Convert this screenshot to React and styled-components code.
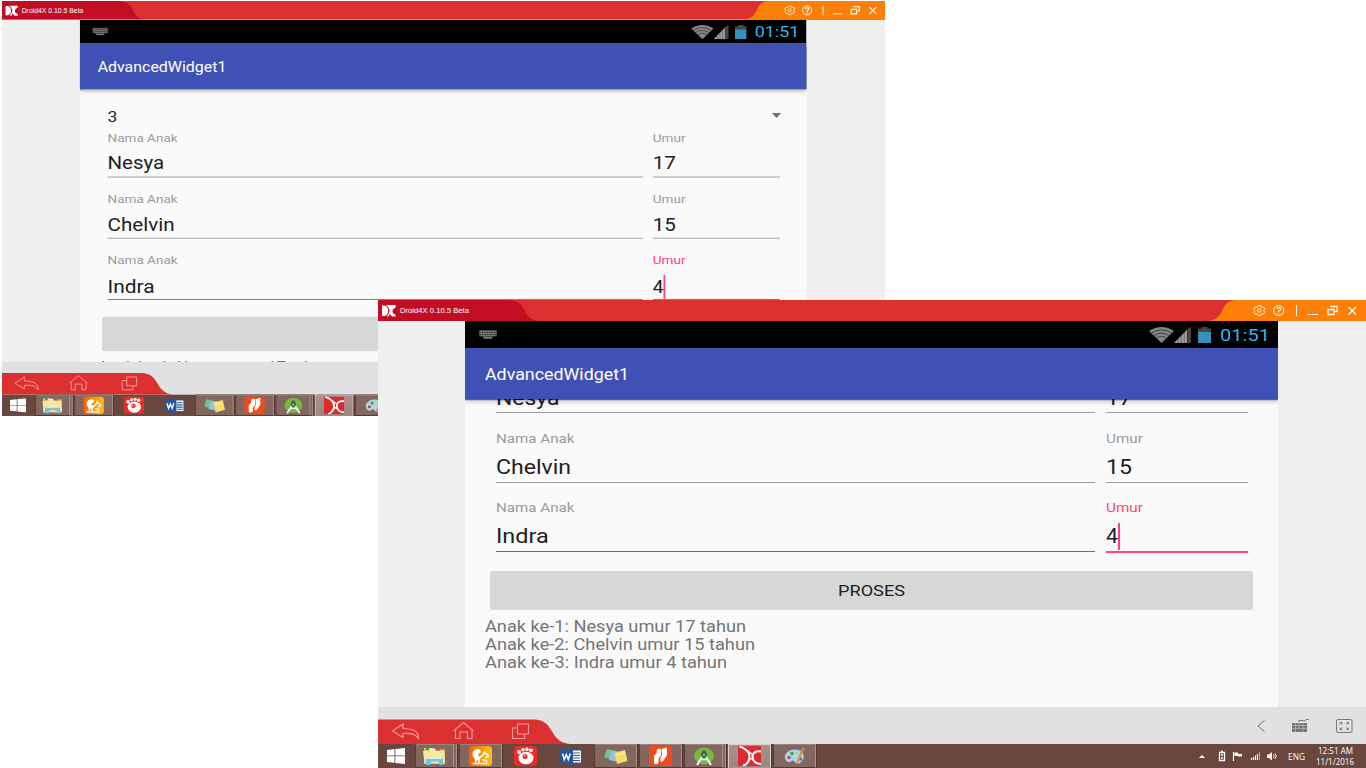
import React, { useLayoutEffect, useRef, useState } from "react";
import styled, { createGlobalStyle, css } from "styled-components";

const GlobalStyle = createGlobalStyle`
  * { box-sizing: border-box; }
  html, body { margin: 0; background: #fff; overflow: hidden; }
  svg { display: block; flex: none; }
`;

/* ---------- text stretched to a fixed width ---------- */

const FitBox = styled.span`
  display: block;
  flex: none;
  width: ${(p) => p.$w}px;
  white-space: nowrap;
`;

const FitInner = styled.span`
  display: inline-block;
  vertical-align: top;
  transform-origin: 0 50%;
`;

function Fit({ w, children }) {
  const ref = useRef(null);
  const [scale, setScale] = useState(1);
  useLayoutEffect(() => {
    const natural = parseFloat(getComputedStyle(ref.current).width);
    if (natural) setScale(w / natural);
  }, [w, children]);
  return (
    <FitBox $w={w}>
      <FitInner ref={ref} style={{ transform: `scaleX(${scale})` }}>{children}</FitInner>
    </FitBox>
  );
}

/* ---------- desktop and windows ---------- */

const Desktop = styled.main`
  position: relative;
  width: 1366px;
  height: 768px;
  overflow: hidden;
  background: #fff;
`;

const Window = styled.section`
  position: absolute;
  left: ${(p) => p.$x}px;
  top: ${(p) => p.$y}px;
  width: 988px;
  height: 468px;
  display: flex;
  flex-direction: column;
  overflow: hidden;
  background: #efefef;
  font-family: Roboto, "Liberation Sans", sans-serif;
  ${(p) => p.$small && css`
    transform: scale(0.8939, 0.8867);
    transform-origin: 0 0;
  `}
`;

const TitleBar = styled.header`
  height: 21px;
  flex: none;
  display: flex;
  justify-content: space-between;
  background: #dc3030;
`;

const TitleTab = styled.div`
  display: grid;
  width: 160px;
  > * { grid-area: 1 / 1; }
`;

const TitleLabel = styled.div`
  display: flex;
  align-items: center;
  gap: 3px;
  padding-left: 3px;
  color: #fff;
  font: 8px/20px "Liberation Sans", Arial, sans-serif;
`;

const Phone = styled.div`
  width: 813px;
  height: 386px;
  margin-left: 87px;
  flex: none;
  display: flex;
  flex-direction: column;
  background: #fafafa;
  overflow: hidden;
`;

const StatusBar = styled.div`
  height: 27px;
  flex: none;
  display: flex;
  align-items: center;
  padding: 0 8.5px 0 13.5px;
  background: #000;
  color: #33b5e5;
  font-size: 17px;
`;

const StatusSpacer = styled.div`flex: 1;`;

const StatusGap = styled.div`width: 7px;`;

const Clock = styled.div`
  margin-left: 8.5px;
  padding-top: 1px;
  line-height: 26px;
`;

const AppBar = styled.div`
  position: relative;
  z-index: 1;
  height: 51px;
  flex: none;
  padding: 2px 0 0 20px;
  background: #3f51b5;
  color: #fff;
  font-size: 16.5px;
  line-height: 50px;
  box-shadow: 0 1px 1px rgba(0, 0, 0, 0.5), 0 2px 5px rgba(0, 0, 0, 0.28);
`;

const Viewport = styled.div`
  flex: 1;
  min-height: 0;
  overflow: hidden;
`;

const Content = styled.div`
  margin-top: ${(p) => -p.$scroll}px;
`;

const Spinner = styled.div`
  height: 46px;
  display: flex;
  justify-content: space-between;
  padding: 18.6px 28px 0 30.5px;
  color: #212121;
  font-size: 17.5px;
  line-height: 24px;
  svg { margin-top: 8.2px; }
`;

const Child = styled.div`
  display: grid;
  grid-template-columns: 599.5px 142px;
  column-gap: 11px;
  height: 69.2px;
  padding-left: 30.5px;
`;

const Label = styled.div`
  height: 18px;
  color: ${(p) => (p.$active ? "#ff4081" : "#9b9b9b")};
  font-size: 13px;
  line-height: 19.4px;
`;

const Value = styled.div`
  display: flex;
  height: 34.6px;
  padding-top: 7.2px;
  color: #212121;
  font-size: 20.8px;
  line-height: 27px;
`;

const Underline = styled.div`
  height: ${(p) => p.$h}px;
  background: ${(p) => p.$c};
`;

const Caret = styled.i`
  width: 2px;
  height: 27px;
  background: #ff4081;
`;

const Button = styled.div`
  display: flex;
  align-items: center;
  justify-content: center;
  width: 763px;
  height: 38.5px;
  margin: 3.8px 0 0 25px;
  padding-top: 1.4px;
  border-radius: 2px;
  background: #d6d8d7;
  color: #212121;
  font-size: 15px;
`;

const Results = styled.div`
  padding: 8.8px 0 0 20px;
  color: #757575;
  font-size: 16px;
  line-height: 17.7px;
`;

/* ---------- emulator bottom bar ---------- */

const BottomBar = styled.div`
  height: 37px;
  flex: none;
  display: flex;
  justify-content: space-between;
  align-items: flex-end;
  background: #e1e1e1;
`;

const Tools = styled.div`
  display: flex;
  align-items: center;
  height: 37px;
  gap: 27px;
  padding-right: 13px;
`;

/* ---------- taskbar ---------- */

const Taskbar = styled.footer`
  height: 24px;
  flex: none;
  display: flex;
  justify-content: space-between;
  background: #69463e;
  color: #fff;
`;

const Apps = styled.div`
  display: flex;
  gap: 2px;
`;

const Task = styled.div`
  display: flex;
  align-items: center;
  justify-content: center;
  width: ${(p) => p.$w || 43}px;
  border: 1px solid transparent;
  ${(p) => p.$open && css`
    background: #826761;
    border-color: #9a827c #a8928d #553730 #5a3b34;
    box-shadow: 1px 0 0 #4f322b;
  `}
  ${(p) => p.$stack && css`
    border-right: 4px double #a8928d;
  `}
  ${(p) => p.$focus && css`
    background: linear-gradient(#a6928e, #9b8681);
    border-color: #d9cfcc #e2dad8 #a8928d #d9cfcc;
  `}
`;

const Tray = styled.div`
  display: flex;
  align-items: center;
  padding-right: 12px;
  font: 9px/11px "Open Sans", "Noto Sans", sans-serif;
`;

const Language = styled.div`margin-left: 9px;`;

const DateTime = styled.div`
  display: flex;
  flex-direction: column;
  align-items: center;
  margin-left: 11px;
  padding-bottom: 1px;
`;

/* ---------- drawings ---------- */

const TabShape = () => (
  <svg width="160" height="21">
    <path d="M0 0H128C139 0 144 4 147 11C150 18 154 20 160 21H0Z" fill="#c30d23" />
  </svg>
);

const Logo = () => (
  <svg width="16" height="12" viewBox="0 0 16 12">
    <path d="M1 0.500H3.500C8.500 2 8.500 9.500 3.500 11H1Z" fill="#fff" />
    <path d="M5 0H14.500V3C10.500 3 10.500 9.500 14.500 9.500V11.500H11L9 9L7.500 11.500H5.500Q9 8 8.500 5Q8 2 5 0Z" fill="#fff" />
  </svg>
);

const Controls = () => (
  <svg width="158" height="21" viewBox="0 0 158 21" fill="none" stroke="#fff">
    <path d="M27 0H158V21H0C8 20 11 17 14 11C17 4 20 1 27 0Z" fill="#fb7f09" stroke="none" />
    <path d="M50 5.500H52.500L53.300 7.200L55.500 7L56.800 9L55.600 10.500L56.800 12.200L55.500 14L53.300 13.900L52.500 15.500H50L49.200 13.900L47 14L45.700 12.200L46.900 10.500L45.700 9L47 7L49.200 7.200Z" strokeWidth="0.900" />
    <circle cx="51.200" cy="10.500" r="1.700" strokeWidth="0.900" />
    <circle cx="70.700" cy="10.500" r="5" />
    <path d="M68.800 9.200Q69 7.700 70.700 7.700T72.600 9.200Q72.500 10.200 70.700 11V12M70.700 12.800V13.800" strokeWidth="1.200" />
    <path d="M88.500 5V16M99.500 14.500H110" />
    <path d="M123 7V6.500H129V11.500H127M120 9.500H126V14.500H120Z" strokeWidth="1.300" />
    <path d="M140.500 7L148 14.500M148 7L140.500 14.500" strokeWidth="1.300" />
  </svg>
);

const StatusKeyboard = () => (
  <svg width="18" height="9" viewBox="0 0 18 9">
    <path d="M0 0H18V6.500H14L13 9H4.500L3.500 6.500H0Z" fill="#4a4a4a" />
    <path d="M1 1.500H17M1.500 3.500H17M2 5.500H16" stroke="#8c8c8c" strokeDasharray="1.500 1" />
    <path d="M5 7.700H13" stroke="#8c8c8c" />
  </svg>
);

const Wifi = () => (
  <svg width="25" height="16" viewBox="0 0 25 16">
    <path d="M0 4Q12.500 -4 25 4L12.500 16Z" fill="#858585" />
    <path d="M2 6.300Q12.500 -0.500 23 6.300M4.500 8.800Q12.500 3.500 20.500 8.800M7.200 11.200Q12.500 7.500 17.800 11.200" fill="none" stroke="#333" strokeWidth="0.800" />
  </svg>
);

const Signal = () => (
  <svg width="17" height="16" viewBox="0 0 17 16">
    <path d="M0 16L13 2.700V16Z" fill="#a2a2a2" />
    <path d="M13.500 2L17 0V16H13.500Z" fill="#484848" />
    <path d="M4.200 11V16M7.200 8V16M10.200 5V16M13.300 2V16" stroke="#444" strokeWidth="0.700" />
  </svg>
);

const Battery = () => (
  <svg width="13" height="16" viewBox="0 0 13 16">
    <path d="M3.500 0H9.500V1.500H13V5H0V1.500H3.500Z" fill="#454545" />
    <path d="M0 5H13V16H0Z" fill="#3591ba" />
  </svg>
);

const DropArrow = () => (
  <svg width="11" height="6"><path d="M0 0H11L5.500 6Z" fill="#737373" /></svg>
);

const NavBar = () => (
  <svg width="196" height="25" viewBox="0 0 196 25" fill="none" stroke="#f39a98" strokeWidth="1.100">
    <path d="M0 0.500H157C167 1 171 7 175 14C179 21 184 24 192 25H0Z" fill="#dc3030" stroke="none" />
    <path d="M25 5L14.500 12L25 18.500V14.500C34 14 37 15 40.500 19.500C41 13 36 9.500 25 9.500Z" />
    <path d="M75.500 12L85.500 3.500L95.500 12M77.500 10.500V19.500H82V13H89.500V19.500H94V10.500" />
    <path d="M139.500 5H150.500V15H139.500ZM139 9H134.500V19.500H146.500V15.500" />
  </svg>
);

const Chevron = () => (
  <svg width="8" height="12" fill="none" stroke="#777"><path d="M7.500 0.500L1 6L7.500 11.500" /></svg>
);

const ToolKeyboard = () => (
  <svg width="17" height="13" viewBox="0 0 17 13" fill="none">
    <path d="M7 3V1.500H11Q12 3 13 1.500T17 0.500" stroke="#777" />
    <path d="M0 4H15V13H0Z" fill="#777" />
    <path d="M0 6.500H15M0 9.500H15M3.500 4V9.500M7 4V9.500M11 4V13M3.500 10V13" stroke="#c4c4c4" strokeWidth="0.600" />
  </svg>
);

const Expand = () => (
  <svg width="17" height="14" viewBox="0 0 17 14" fill="none" stroke="#777">
    <rect x="0.500" y="0.500" width="15.500" height="13" rx="1.500" />
    <path d="M4 5.500V3.500H6.500M4 3.500L6.500 5.500M10 5.500L12.500 3.500M10.500 3.500H12.500V5.500M4 8.500V10.500H6.500M4 10.500L6.500 8.500M10 8.500L12.500 10.500M10.500 10.500H12.500V8.500" strokeWidth="0.900" />
  </svg>
);

const WindowsIcon = () => (
  <svg width="18" height="16" viewBox="0 0 18 16" fill="#fff">
    <path d="M0 2L7.500 1V7.500H0ZM8.300 0.900L18 0V7.500H8.300ZM0 8.300H7.500V14.700L0 14ZM8.300 8.300H18V16L8.300 15Z" />
  </svg>
);

const FolderIcon = () => (
  <svg width="23" height="19" viewBox="0 0 23 19">
    <path d="M1 1H8L10 2.500H22V17H1Z" fill="#e2c768" />
    <path d="M3 0.500H6V3H3Z" fill="#2da84c" /><path d="M7 1.500H12V3.500H7Z" fill="#fff" />
    <path d="M13 1.500H17V3.500H13Z" fill="#c8513b" />
    <path d="M0 4H21L22 16H1.500Z" fill="#f4e9a2" />
    <path d="M4 11H20V18H16V14.500H8V18H3V13Z" fill="#79bfe2" />
    <path d="M4.500 11.500H19.500" stroke="#d5eef9" />
  </svg>
);

const SquirrelIcon = () => (
  <svg width="23" height="20" viewBox="0 0 23 20">
    <defs><linearGradient id="uc" x1="0" x2="1"><stop stopColor="#fa5f0a" /><stop offset="1" stopColor="#fcc303" /></linearGradient></defs>
    <rect width="23" height="20" rx="3.500" fill="url(#uc)" />
    <path d="M6.500 16.500C8.500 12.500 2.500 11 4.500 6.500C6.500 2.500 12 3 11 6C10.500 7.500 8.500 7 8.500 8.500C8.500 10 10.500 10.500 10 12.500" fill="#fff" stroke="#fff" strokeWidth="1.200" />
    <path d="M10.500 17.500Q8.500 13 12 10.500Q14 10 14.500 8L15.500 6L16.500 7.800Q20 8.500 19 10.500Q17.500 11.500 16 11.500" fill="none" stroke="#fff" strokeWidth="1.700" />
    <path d="M3.500 17.500H17.500Q18.500 15.500 16.500 13.500M13 14Q15 13 15.500 15.500" fill="none" stroke="#fff" strokeWidth="1.400" />
  </svg>
);

const PawIcon = () => (
  <svg width="23" height="20" viewBox="0 0 23 20">
    <rect width="23" height="20" rx="3.500" fill="#ec2c25" />
    <ellipse cx="12" cy="12" rx="7.500" ry="6.300" fill="#fff" />
    <circle cx="5" cy="6" r="2" fill="#fff" /><circle cx="9" cy="3.800" r="1.700" fill="#fff" />
    <circle cx="13" cy="3.200" r="1.700" fill="#fff" /><circle cx="17" cy="4.300" r="1.900" fill="#fff" />
    <circle cx="11" cy="10.500" r="2.500" fill="#ec2c25" /><circle cx="10.500" cy="9.800" r="0.800" fill="#fff" />
  </svg>
);

const WordIcon = () => (
  <svg width="22" height="17" viewBox="0 0 22 17">
    <path d="M11 2H21.500V15H11Z" fill="#fff" stroke="#2a5699" />
    <path d="M13 5H20M13 7.500H20M13 10H20M13 12.500H20" stroke="#2a5699" strokeWidth="1.200" />
    <path d="M0 2L13 0V17L0 15Z" fill="#2a5699" />
    <path d="M2.500 5.500L4.300 11.500L6.300 6.500L8.300 11.500L10.300 5.500" fill="none" stroke="#fff" strokeWidth="1.500" />
  </svg>
);

const NotesIcon = () => (
  <svg width="24" height="17" viewBox="0 0 24 17">
    <path d="M3 1L12 3L9 12L0 9Z" fill="#79c186" />
    <path d="M7 3L16 3.500L14 14L5 12Z" fill="#8bc4e8" />
    <path d="M10 5L21 2L23.500 13L13 16Q12 10 10 5Z" fill="#f7dc62" />
    <path d="M12 6L20.500 4L21 6L12.500 8Z" fill="#fbeb9a" />
  </svg>
);

const NitroIcon = () => (
  <svg width="23" height="20" viewBox="0 0 23 20">
    <path d="M0 0H23V20H0Z" fill="#f04a1d" />
    <path d="M5 17V10L7.500 7L8 3.500Q10 1.500 12 3.500V9L9.500 13V17Q7 19.500 5 17ZM12.500 3L18 1.500V9L15.500 13Q14 16.500 11.500 15.500V12L13 9Z" fill="#fff" />
  </svg>
);

const StudioIcon = () => (
  <svg width="22" height="19" viewBox="0 0 22 19">
    <ellipse cx="11" cy="9" rx="10" ry="8.500" fill="#77b843" />
    <path d="M11 3.500V8" stroke="#485a4a" strokeWidth="3" />
    <circle cx="11" cy="8" r="3" fill="#485a4a" /><circle cx="11" cy="8" r="1.100" fill="#b9d9a2" />
    <path d="M9 10L4 18M13 10L18 18" stroke="#f2f2f2" strokeWidth="2" />
    <path d="M5.500 14Q11 11 16.500 14" fill="none" stroke="#f2f2f2" strokeWidth="1.400" />
  </svg>
);

const DroidIcon = () => (
  <svg width="23" height="20" viewBox="0 0 23 20">
    <path d="M0 0H23V20H0Z" fill="#dc2a2e" />
    <path d="M1.500 0.500C7 2 11.500 6 11.500 10.500C11.500 15 8.500 18.500 5 20" fill="none" stroke="#fff" strokeWidth="2" />
    <path d="M23 5.500C17.500 4.500 14.500 7 14.500 10.500C14.500 15 18 18 23 18" fill="none" stroke="#fff" strokeWidth="2" />
    <path d="M9.500 4.500Q12 8 14.500 8M11 14Q13 11.500 15.500 14" fill="none" stroke="#fff" strokeWidth="1.500" />
  </svg>
);

const PaintIcon = () => (
  <svg width="22" height="18" viewBox="0 0 22 18">
    <path d="M1 11C0 5 8 1 14 3C21 4 21 12 17 15C14 18 11 16 10 14C8 12 7 16 4 15Q1.500 14 1 11Z" fill="#a9d7ee" />
    <circle cx="5" cy="10.500" r="1.700" fill="#d93d33" /><circle cx="8" cy="6.500" r="1.700" fill="#4b9b40" />
    <circle cx="12.500" cy="5.500" r="1.500" fill="#f1c63c" /><circle cx="16.500" cy="12" r="1.700" fill="#3d75bd" />
    <path d="M18 4L13 16" stroke="#e2933a" strokeWidth="2.200" />
    <path d="M16.500 4L18.500 0L21.500 2L18.500 5Z" fill="#b98655" />
  </svg>
);

const TrayIcons = () => (
  <svg width="80" height="16" viewBox="0 0 80 16" fill="none" stroke="#fff">
    <path d="M0 10L3 7L6 10Z" fill="#fff" stroke="none" />
    <path d="M20.500 4.500H25.500V12.500H20.500ZM22 3.500H24M22 7H24M22 10H24" strokeWidth="1.300" />
    <path d="M34.500 4V13" strokeWidth="1.200" />
    <path d="M35.500 4.500H39V6H43V8.500H39V8H35.500Z" fill="#fff" stroke="none" />
    <path d="M52.500 10V12M54.500 9V12M56.500 7.500V12M58.500 6V12" strokeWidth="1.200" />
    <path d="M60.500 4V12" stroke="#b8a7a3" />
    <path d="M68 6.500H70L73 4V12.500L70 10H68Z" fill="#fff" stroke="none" />
    <path d="M74.500 6.500Q76 8.200 74.500 10M76 5.500Q78.500 8.200 76 11" strokeWidth="0.900" />
  </svg>
);

/* ---------- data ---------- */

const CHILDREN = [
  { name: "Nesya", nameW: 63.5, age: "17", ageW: 26 },
  { name: "Chelvin", nameW: 75, age: "15", ageW: 26 },
  { name: "Indra", nameW: 52.7, age: "4", ageW: 12, focused: true },
];

const RESULTS = [
  ["Anak ke-1: Nesya umur 17 tahun", 261],
  ["Anak ke-2: Chelvin umur 15 tahun", 270],
  ["Anak ke-3: Indra umur 4 tahun", 242],
];

function ChildFields({ child }) {
  return (
    <Child>
      <div>
        <Label><Fit w={78.5}>Nama Anak</Fit></Label>
        <Value><Fit w={child.nameW}>{child.name}</Fit></Value>
        <Underline $h={child.focused ? 1.5 : 1} $c={child.focused ? "#6e6e6e" : "#9c9c9c"} />
      </div>
      <div>
        <Label $active={child.focused}><Fit w={36.8}>Umur</Fit></Label>
        <Value>
          <Fit w={child.ageW}>{child.age}</Fit>
          {child.focused && <Caret />}
        </Value>
        <Underline $h={child.focused ? 2.6 : 1} $c={child.focused ? "#ff4081" : "#9c9c9c"} />
      </div>
    </Child>
  );
}

function Emulator({ x, y, small, scroll }) {
  return (
    <Window $x={x} $y={y} $small={small}>
      <TitleBar>
        <TitleTab>
          <TabShape />
          <TitleLabel><Logo /><Fit w={69}>Droid4X 0.10.5 Beta</Fit></TitleLabel>
        </TitleTab>
        <Controls />
      </TitleBar>
      <Phone>
        <StatusBar>
          <StatusKeyboard />
          <StatusSpacer />
          <Wifi /><Signal />
          <StatusGap />
          <Battery />
          <Clock><Fit w={50}>01:51</Fit></Clock>
        </StatusBar>
        <AppBar><Fit w={144}>AdvancedWidget1</Fit></AppBar>
        <Viewport>
          <Content $scroll={scroll}>
            <Spinner><Fit w={11}>3</Fit><DropArrow /></Spinner>
            {CHILDREN.map((c) => <ChildFields key={c.name} child={c} />)}
            <Button><Fit w={67}>PROSES</Fit></Button>
            <Results>
              {RESULTS.map(([text, w]) => <Fit key={text} w={w}>{text}</Fit>)}
            </Results>
          </Content>
        </Viewport>
      </Phone>
      <BottomBar>
        <NavBar />
        <Tools><Chevron /><ToolKeyboard /><Expand /></Tools>
      </BottomBar>
      <Taskbar>
        <Apps>
          <Task $w={35}><WindowsIcon /></Task>
          <Task $w={42} $open $stack><FolderIcon /></Task>
          <Task $w={43} $open><SquirrelIcon /></Task>
          <Task $w={43}><PawIcon /></Task>
          <Task $w={43}><WordIcon /></Task>
          <Task $w={43} $open><NotesIcon /></Task>
          <Task $w={43} $open><NitroIcon /></Task>
          <Task $w={42} $open $stack><StudioIcon /></Task>
          <Task $w={43} $open $focus><DroidIcon /></Task>
          <Task $w={43} $open><PaintIcon /></Task>
        </Apps>
        <Tray>
          <TrayIcons />
          <Language><Fit w={17}>ENG</Fit></Language>
          <DateTime><Fit w={35}>12:51 AM</Fit><Fit w={38}>11/1/2016</Fit></DateTime>
        </Tray>
      </Taskbar>
    </Window>
  );
}

export default function App() {
  return (
    <Desktop>
      <GlobalStyle />
      <Emulator x={2} y={1} small scroll={0} />
      <Emulator x={378} y={300} scroll={85.2} />
    </Desktop>
  );
}
